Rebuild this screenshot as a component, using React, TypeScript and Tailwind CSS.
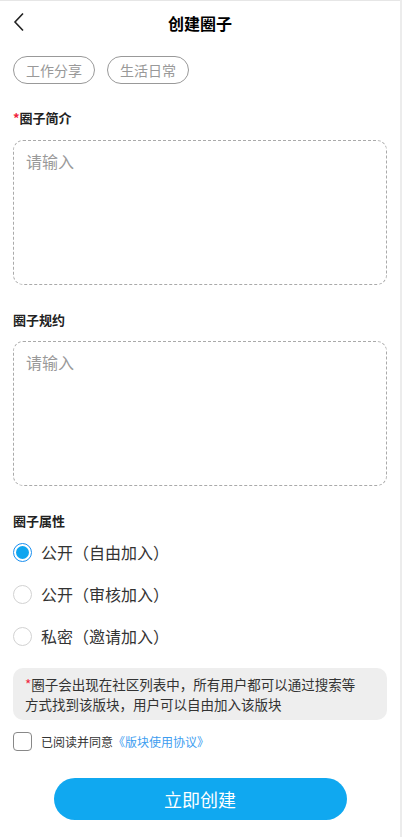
import React, { useState } from "react";

const font = { fontFamily: '"Noto Sans CJK SC", "Noto Sans", sans-serif' };

function Radio({ checked, label, onClick }: { checked: boolean; label: string; onClick: () => void }) {
  return (
    <div className="flex h-[42px] items-center" onClick={onClick}>
      {checked ? (
        <div className="flex h-[19px] w-[19px] items-center justify-center rounded-full border border-[#1a8ff0] bg-white">
          <div className="h-[13px] w-[13px] rounded-full bg-[#0ea5ef]" />
        </div>
      ) : (
        <div className="h-[19px] w-[19px] rounded-full border border-[#d2d2d2] bg-white" />
      )}
      <span className="ml-[9px] text-[16px] leading-none text-[#333]">{label}</span>
    </div>
  );
}

export default function App() {
  const [sel, setSel] = useState(0);
  return (
    <div className="flex min-h-[837px] w-[402px] bg-white" style={font}>
      <div className="flex w-[400px] flex-col border-t border-[#e6e6e6]">
        <div className="relative flex h-[43px] items-center justify-center">
          <svg className="absolute left-[13px] top-[11px]" width="12" height="20" viewBox="0 0 12 20">
            <path d="M10 1.5 L2 10 L10 18.5" fill="none" stroke="#222" strokeWidth="1.6" />
          </svg>
          <span className="text-[16px] font-bold text-black">创建圈子</span>
        </div>
        <div className="px-[13px]">
          <div className="mt-[12px] flex gap-[12px]">
            <div className="flex h-[28px] w-[82px] items-center justify-center rounded-full border border-[#999] text-[14px] text-[#999]">工作分享</div>
            <div className="flex h-[28px] w-[82px] items-center justify-center rounded-full border border-[#999] text-[14px] text-[#999]">生活日常</div>
          </div>

          <div className="mt-[24px] flex h-[20px] items-center text-[13px] font-bold text-[#222]">
            <span className="text-[#f0233a]">*</span>圈子简介
          </div>
          <div className="mt-[12px] h-[145px] rounded-[10px] border border-dashed border-[#aaa] px-[12px] pt-[8px] text-[16px] text-[#999]">
            请输入
          </div>

          <div className="mt-[25px] flex h-[20px] items-center text-[13px] font-bold text-[#222]">圈子规约</div>
          <div className="mt-[11px] h-[145px] rounded-[10px] border border-dashed border-[#aaa] px-[12px] pt-[8px] text-[16px] text-[#999]">
            请输入
          </div>

          <div className="mt-[25px] flex h-[20px] items-center text-[13px] font-bold text-[#222]">圈子属性</div>
          <div className="flex flex-col">
            <Radio checked={sel === 0} label="公开（自由加入）" onClick={() => setSel(0)} />
            <Radio checked={sel === 1} label="公开（审核加入）" onClick={() => setSel(1)} />
            <Radio checked={sel === 2} label="私密（邀请加入）" onClick={() => setSel(2)} />
          </div>

          <div className="mt-[11px] rounded-[10px] bg-[#eeeeee] py-[6px] pl-[12px] pr-[22px] text-[13.5px] leading-[20px] text-[#333]">
            <span className="text-[#f0233a]">*</span>圈子会出现在社区列表中，所有用户都可以通过搜索等方式找到该版块，用户可以自由加入该版块
          </div>

          <div className="mt-[12px] flex items-center">
            <div className="h-[19px] w-[19px] rounded-[4px] border border-[#888] bg-white" />
            <span className="ml-[9px] text-[12px] text-[#333]">已阅读并同意</span>
            <span className="text-[12px] text-[#3d9df0]">《版块使用协议》</span>
          </div>

          <div className="mt-[27px] flex justify-center">
            <div className="flex h-[42px] w-[293px] items-center justify-center rounded-full bg-[#10a8f0] text-[18px] text-white">
              立即创建
            </div>
          </div>
        </div>
      </div>
      <div className="w-[2px] bg-[#ececec]" />
    </div>
  );
}
